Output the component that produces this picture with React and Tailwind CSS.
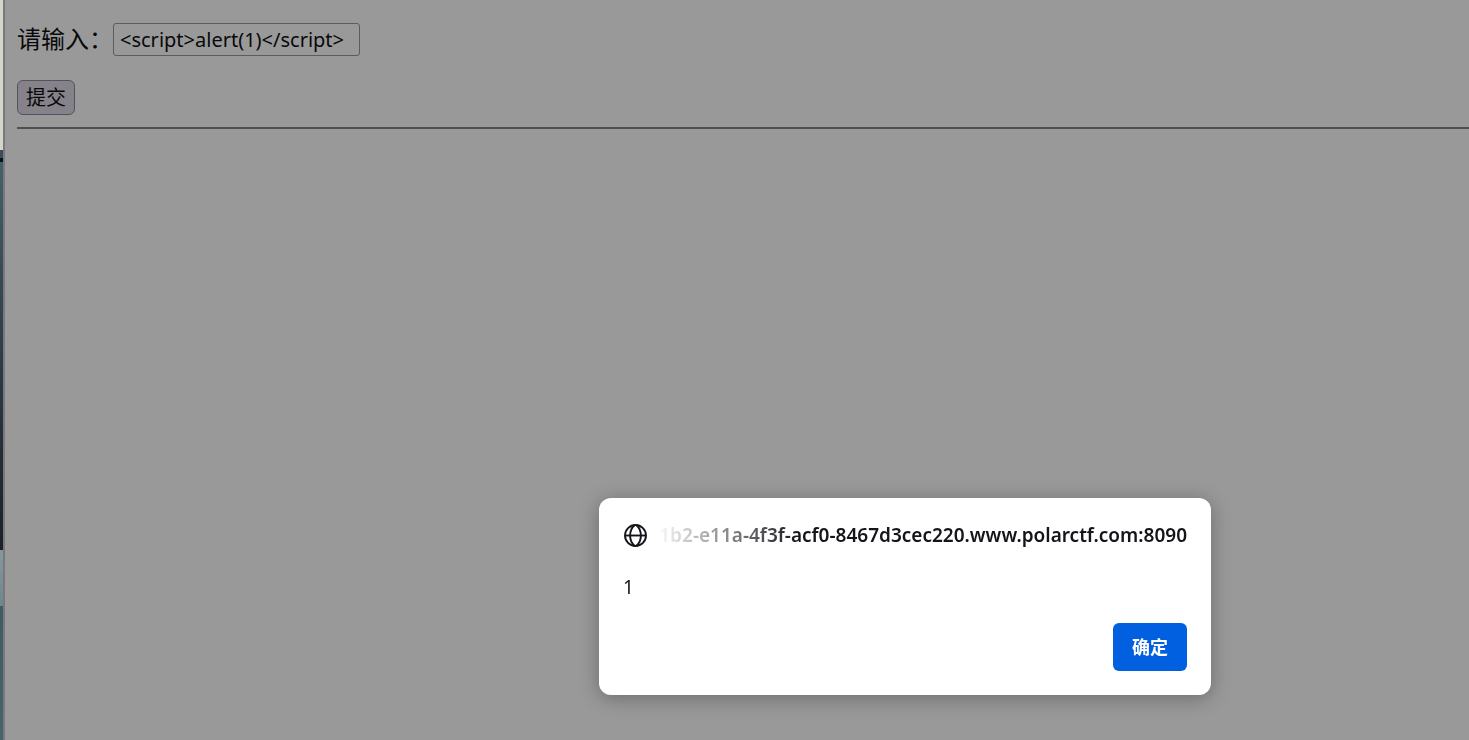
import { useState } from "react";

function GlobeIcon() {
  return (
    <svg
      viewBox="0 0 24 24"
      fill="none"
      stroke="currentColor"
      strokeWidth="1.9"
      className="size-6 shrink-0"
      aria-hidden="true"
    >
      <circle cx="12.5" cy="12.5" r="10.5" />
      <path d="M2 12.5h21" />
      <path d="M11.6 2C5.6 7.6 5.6 17.4 11.6 23M13.4 2c6 5.6 6 15.4 0 21" />
    </svg>
  );
}

// Sliver of the desktop wallpaper that shows beside the window
function DesktopEdge() {
  return (
    <div className="flex w-[3px] shrink-0 flex-col" aria-hidden="true">
      <div className="h-[150px] bg-[#d5d5cd]" />
      <div className="h-2 bg-[#3a4d58]" />
      <div className="h-1 bg-[#0b1014]" />
      <div className="h-[388px] bg-linear-to-b from-[#48606b] via-[#2b3d49] to-[#1b2227]" />
      <div className="h-14 bg-linear-to-b from-[#84999f] to-[#6f868d]" />
      <div className="grow bg-linear-to-b from-[#3f5b68] to-[#48626f]" />
    </div>
  );
}

function InputForm() {
  const [value, setValue] = useState("<script>alert(1)</script>");

  return (
    <form onSubmit={(e) => e.preventDefault()}>
      <div className="flex items-start">
        <label htmlFor="payload" className="w-24 text-2xl leading-8 whitespace-nowrap">
          请输入：
        </label>
        <input
          id="payload"
          type="text"
          value={value}
          onChange={(e) => setValue(e.target.value)}
          className="h-[33px] w-[247px] rounded-[3px] border border-[#5b5b62] bg-[#99999a] px-1.5 text-xl"
        />
      </div>
      <button
        type="submit"
        className="mt-6 flex h-[35px] w-[58px] items-center justify-center rounded-md border border-[#53525f] bg-[#858389] text-xl"
      >
        提交
      </button>
    </form>
  );
}

function AlertDialog({ origin, message, onClose }) {
  return (
    <div
      role="alertdialog"
      aria-labelledby="alert-origin"
      aria-describedby="alert-message"
      className="w-[612px] rounded-xl bg-white p-6 text-[#15141a] shadow-[0_3px_20px_rgba(0,0,0,0.3)]"
    >
      <div className="flex h-[25px] items-center gap-2">
        <GlobeIcon />
        {/* long origins are cut at the start, so the domain stays readable */}
        <div
          id="alert-origin"
          className="flex min-w-0 grow justify-end overflow-hidden text-[19px] leading-6 font-semibold whitespace-nowrap [mask-image:linear-gradient(to_right,transparent,black_144px)]"
        >
          {origin}
        </div>
      </div>
      <p id="alert-message" className="mt-7 text-[19px] leading-6">
        {message}
      </p>
      <div className="mt-6 flex justify-end">
        <button
          type="button"
          onClick={onClose}
          className="h-12 w-[74px] rounded-md bg-[#0060df] text-lg font-bold text-white"
        >
          确定
        </button>
      </div>
    </div>
  );
}

export default function App() {
  const [open, setOpen] = useState(true);

  return (
    <div className="flex min-h-screen font-['Noto_Sans','Noto_Sans_CJK_SC',sans-serif] text-[#09090b]">
      <DesktopEdge />
      <main className="grow border-l-2 border-[#7b7879] bg-[#99999a] pt-[23px] pl-3">
        <InputForm />
        <hr className="mt-3 border-t-2 border-[#4d4e50]" />
      </main>
      {open && (
        <div className="fixed inset-0 flex items-end justify-end pr-[258px] pb-[45px]">
          <AlertDialog
            origin="1b2-e11a-4f3f-acf0-8467d3cec220.www.polarctf.com:8090"
            message="1"
            onClose={() => setOpen(false)}
          />
        </div>
      )}
    </div>
  );
}
